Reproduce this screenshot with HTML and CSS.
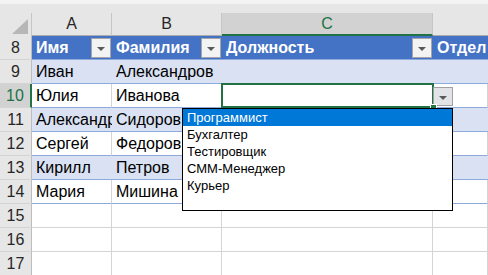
FILE: index.html
```html
<!DOCTYPE html>
<html lang="ru">
<head>
  <meta charset="UTF-8">
  <meta name="viewport" content="width=device-width, initial-scale=1.0">
  <title>Должность — список</title>
  <link rel="stylesheet" href="styles.css">
</head>
<body>

  <!-- bottom edge of the formula bar -->
  <div class="bar-edge"></div>

  <!-- worksheet grid -->
  <div class="sheet">
    <div class="corner">
      <svg width="16" height="15" viewBox="0 0 16 15"><polygon points="16,0 16,15 0,15" fill="#b7b7b7"/></svg>
    </div>
    <div class="colhead">A</div>
    <div class="colhead">B</div>
    <div class="colhead active">C</div>
    <div class="colhead last"></div>

    <!-- table header row -->
    <div class="rowhead">8</div>
    <div class="cell th">Имя<span class="filter"></span></div>
    <div class="cell th">Фамилия<span class="filter"></span></div>
    <div class="cell th">Должность<span class="filter"></span></div>
    <div class="cell th">Отдел</div>

    <div class="rowhead">9</div>
    <div class="cell band">Иван</div>
    <div class="cell band">Александров</div>
    <div class="cell band"></div>
    <div class="cell band"></div>

    <div class="rowhead active">10</div>
    <div class="cell plain">Юлия</div>
    <div class="cell plain">Иванова</div>
    <div class="cell plain selected"><span class="handle"></span></div>
    <div class="cell plain"></div>

    <div class="rowhead">11</div>
    <div class="cell band">Александра</div>
    <div class="cell band">Сидоров</div>
    <div class="cell band"></div>
    <div class="cell band"></div>

    <div class="rowhead">12</div>
    <div class="cell plain">Сергей</div>
    <div class="cell plain">Федоров</div>
    <div class="cell plain"></div>
    <div class="cell plain"></div>

    <div class="rowhead">13</div>
    <div class="cell band">Кирилл</div>
    <div class="cell band">Петров</div>
    <div class="cell band"></div>
    <div class="cell band"></div>

    <div class="rowhead">14</div>
    <div class="cell plain">Мария</div>
    <div class="cell plain">Мишина</div>
    <div class="cell plain"></div>
    <div class="cell plain"></div>

    <div class="rowhead">15</div>
    <div class="cell"></div>
    <div class="cell"></div>
    <div class="cell"></div>
    <div class="cell"></div>

    <div class="rowhead">16</div>
    <div class="cell"></div>
    <div class="cell"></div>
    <div class="cell"></div>
    <div class="cell"></div>

    <div class="rowhead">17</div>
    <div class="cell"></div>
    <div class="cell"></div>
    <div class="cell"></div>
    <div class="cell"></div>
  </div>

  <!-- data validation drop-down -->
  <div class="dd-arrow"></div>
  <ul class="dd-list">
    <li class="current">Программист</li>
    <li>Бухгалтер</li>
    <li>Тестировщик</li>
    <li>СММ-Менеджер</li>
    <li>Курьер</li>
  </ul>

</body>
</html>
```

FILE: styles.css
```css
/* Page */
body {
  position: relative;
  margin: 0;
  width: 488px;
  height: 275px;
  overflow: hidden;
  background: #fff;
  font-family: 'Liberation Sans', Arial, sans-serif;
  color: #000;
}

/* Strip above the column letters */
.bar-edge {
  height: 13px;
  box-sizing: border-box;
  background: #e6e6e6;
  border-top: 4px solid #f3f3f3;
}

/* Sheet grid */
.sheet {
  display: grid;
  grid-template-columns: 32px 80px 110px 211px 1fr;
  grid-template-rows: 23px;
  grid-auto-rows: 24px;
}

/* Headers */
.corner {
  display: flex;
  align-items: flex-end;
  justify-content: flex-end;
  padding: 0 3px 2px 0;
  background: #e6e6e6;
  border-right: 1px solid #c6c6c6;
}

.colhead {
  display: flex;
  align-items: center;
  justify-content: center;
  background: #e6e6e6;
  border-right: 1px solid #c6c6c6;
  border-bottom: 1px solid #ababab;
  font-size: 16px;
  color: #262626;
}

.colhead.active {
  background: #d2d2d2;
  color: #217346;
  border-bottom: 2px solid #217346;
}

.colhead.last {
  border-right: none;
}

.rowhead {
  display: flex;
  align-items: center;
  justify-content: center;
  background: #e6e6e6;
  border-right: 1px solid #bdbdbd;
  border-bottom: 1px solid #d4d4d4;
  font-size: 16px;
  color: #262626;
}

.rowhead.active {
  background: #d2d2d2;
  color: #217346;
  border-right: 2px solid #217346;
}

/* Cells */
.cell {
  position: relative;
  display: flex;
  align-items: center;
  padding-left: 4px;
  overflow: hidden;
  white-space: nowrap;
  font-size: 16px;
  border-right: 1px solid #d4d4d4;
  border-bottom: 1px solid #d4d4d4;
}

.cell.th {
  justify-content: space-between;
  background: #4472c4;
  border-right: none;
  border-bottom: 1px solid #8ea9db;
  color: #fff;
  font-weight: bold;
}

.cell.band {
  background: #d9e1f2;
  border-right: none;
  border-bottom: 1px solid #8ea9db;
}

.cell.plain {
  border-bottom: 1px solid #8ea9db;
}

/* Filter buttons in the header row */
.filter {
  position: relative;
  flex: none;
  width: 20px;
  height: 20px;
  margin-right: 1px;
  box-sizing: border-box;
  background: #f3f3f3;
  border: 1px solid #a6a6a6;
}

.filter::after,
.dd-arrow::after {
  content: '';
  position: absolute;
  left: 5px;
  top: 8px;
  border-left: 4px solid transparent;
  border-right: 4px solid transparent;
  border-top: 4px solid #595959;
}

/* Active cell */
.cell.selected {
  overflow: visible;
}

.cell.selected::after {
  content: '';
  position: absolute;
  left: -1px;
  top: -1px;
  right: -2px;
  bottom: -1px;
  border: 2px solid #217346;
}

.handle {
  position: absolute;
  right: -5px;
  bottom: -4px;
  width: 5px;
  height: 5px;
  background: #217346;
  border: 1px solid #fff;
  z-index: 1;
}

/* Drop-down button next to the active cell */
.dd-arrow {
  position: absolute;
  left: 433px;
  top: 87px;
  width: 20px;
  height: 19px;
  box-sizing: border-box;
  background: #e1e3e6;
  border: 1px solid #a0a0a0;
}

/* Drop-down list */
.dd-list {
  position: absolute;
  left: 182px;
  top: 108px;
  width: 271px;
  height: 103px;
  box-sizing: border-box;
  margin: 0;
  padding: 0;
  list-style: none;
  background: #fff;
  border: 1px solid #000;
  font-size: 13px;
  z-index: 2;
}

.dd-list li {
  height: 17px;
  line-height: 17px;
  padding-left: 4px;
  color: #000;
}

.dd-list li.current {
  background: #0078d7;
  color: #fff;
}
```
